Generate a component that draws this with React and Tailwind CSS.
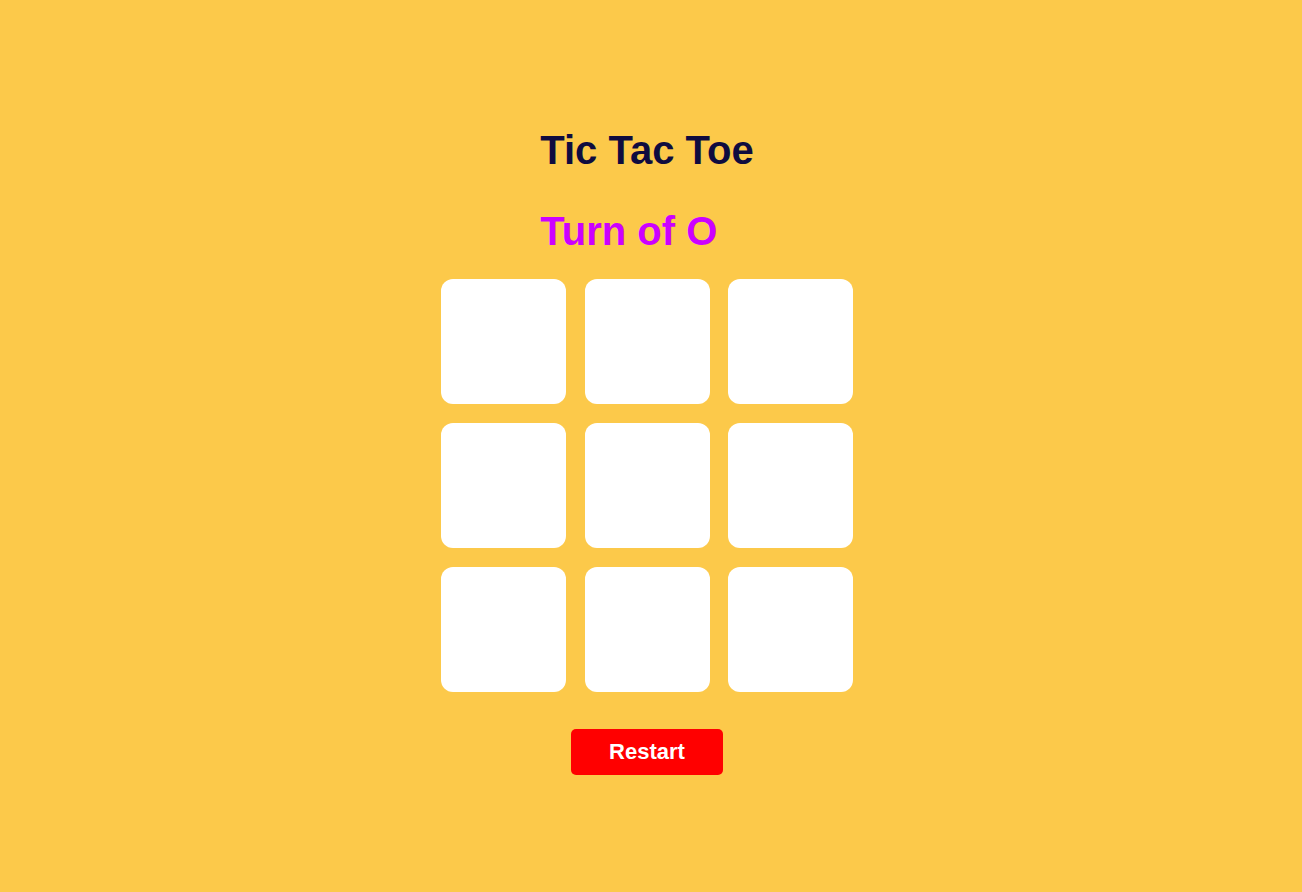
import React, { useState } from 'react';

const FONT = { fontFamily: '"Liberation Sans", Arial, sans-serif' };

function Cell({ value, onClick }) {
  return (
    <button
      className="flex h-[125px] w-[125px] items-center justify-center rounded-xl bg-white text-6xl font-bold text-[#0f0c3f]"
      onClick={onClick}
    >
      {value}
    </button>
  );
}

export default function App() {
  const [board, setBoard] = useState(Array(9).fill(null));
  const [turn, setTurn] = useState('O');

  const play = (i) => {
    if (board[i]) return;
    const next = [...board];
    next[i] = turn;
    setBoard(next);
    setTurn(turn === 'O' ? 'X' : 'O');
  };

  const restart = () => {
    setBoard(Array(9).fill(null));
    setTurn('O');
  };

  return (
    <div
      className="flex min-h-[892px] w-full flex-col items-center bg-[#fcc94a] pr-2 pt-[127px]"
      style={FONT}
    >
      <div className="flex flex-col items-start">
        <h1 className="text-[40px] font-bold leading-[46px] text-[#0f0c3f]">
          Tic Tac Toe
        </h1>
        <h2 className="mt-[35px] text-[40px] font-bold leading-[46px] text-[#cc00ff]">
          Turn of {turn}
        </h2>
      </div>

      <div className="mt-[25px] grid w-[412px] grid-cols-3 gap-x-[18.5px] gap-y-[19px]">
        {board.map((v, i) => (
          <Cell key={i} value={v} onClick={() => play(i)} />
        ))}
      </div>

      <button
        className="mt-[37px] h-[46px] w-[152px] rounded-[5px] bg-[#ff0000] pb-[2px] text-[22px] font-bold text-white"
        onClick={restart}
      >
        Restart
      </button>
    </div>
  );
}
